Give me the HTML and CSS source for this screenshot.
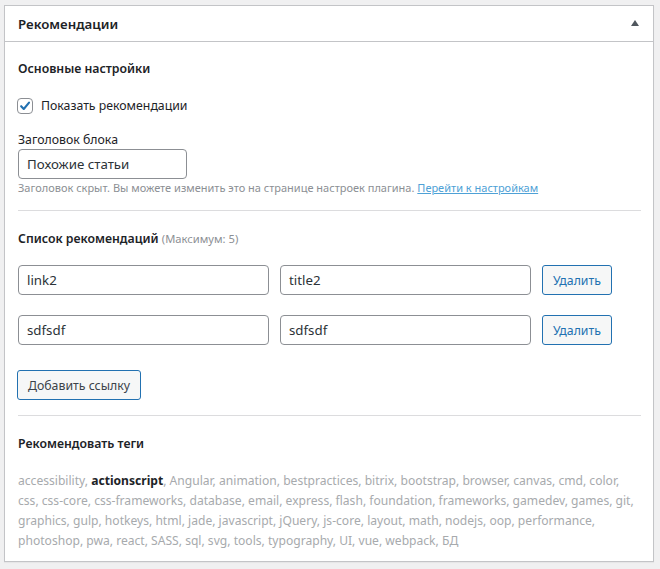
FILE: index.html
```html
<!DOCTYPE html>
<html lang="ru">
<head>
<meta charset="utf-8">
<link rel="stylesheet" href="styles.css">
</head>
<body>
<div class="postbox">
  <div class="postbox-header">
    <h2 class="title">Рекомендации</h2>
    <span class="toggle"></span>
  </div>
  <div class="inside">
    <h3 class="section-title">Основные настройки</h3>
    <label class="check-row">
      <span class="checkbox"><svg viewBox="0 0 16 16" width="16" height="16"><path d="M3.6 8.2 L6.6 11.4 L12.6 4.2" fill="none" stroke="#2271b1" stroke-width="2.4" stroke-linecap="round" stroke-linejoin="round"/></svg></span>
      <span>Показать рекомендации</span>
    </label>
    <div class="field-label">Заголовок блока</div>
    <div class="input short">Похожие статьи</div>
    <p class="description">Заголовок скрыт. Вы можете изменить это на странице настроек плагина. <a href="#">Перейти к настройкам</a></p>
    <hr class="divider">
    <h3 class="section-title list-title">Список рекомендаций <span class="muted">(Максимум: 5)</span></h3>
    <div class="rec-row">
      <div class="input wide">link2</div>
      <div class="input wide">title2</div>
      <span class="button">Удалить</span>
    </div>
    <div class="rec-row">
      <div class="input wide">sdfsdf</div>
      <div class="input wide">sdfsdf</div>
      <span class="button">Удалить</span>
    </div>
    <span class="button add">Добавить ссылку</span>
    <hr class="divider divider-2">
    <h3 class="section-title tags-title">Рекомендовать теги</h3>
    <p class="tags">accessibility, <b>actionscript</b>, Angular, animation, bestpractices, bitrix, bootstrap, browser, canvas, cmd, color, css, css-core, css-frameworks, database, email, express, flash, foundation, frameworks, gamedev, games, git, graphics, gulp, hotkeys, html, jade, javascript, jQuery, js-core, layout, math, nodejs, oop, performance, photoshop, pwa, react, SASS, sql, svg, tools, typography, UI, vue, webpack, БД</p>
  </div>
</div>
</body>
</html>
```

FILE: styles.css
```css
html, body {
  margin: 0;
  padding: 0;
  background: #f0f0f1;
}
body {
  padding: 5px 6px 10px 4px;
  font-family: "Noto Sans", "Open Sans", sans-serif;
  font-size: 12.3px;
  color: #1d2327;
}
.postbox {
  background: #fff;
  border: 1px solid #c3c4c7;
  box-shadow: 0 1px 1px rgba(0,0,0,0.04);
}
.postbox-header {
  display: flex;
  align-items: center;
  justify-content: space-between;
  height: 35px;
  border-bottom: 1px solid #c3c4c7;
  padding: 0 14px 0 13px;
}
.title {
  margin: 0;
  font-size: 13.3px;
  font-weight: 600;
}
.toggle {
  width: 0;
  height: 0;
  border-left: 4px solid transparent;
  border-right: 4px solid transparent;
  border-bottom: 6px solid #50575e;
  margin-top: -1px;
}
.inside {
  padding: 12px 12px 10px 13px;
}
.section-title {
  margin: 6px 0 0;
  font-size: 12.3px;
  font-weight: 600;
  line-height: 18px;
}
.check-row {
  display: flex;
  align-items: center;
  gap: 8px;
  margin-top: 18px;
  line-height: 20px;
}
.checkbox {
  width: 14px;
  height: 14px;
  border: 1px solid #8c8f94;
  border-radius: 4px;
  display: flex;
  align-items: center;
  justify-content: center;
  margin-left: -1px;
}
.field-label {
  margin-top: 15px;
  line-height: 18px;
}
.input {
  box-sizing: border-box;
  height: 30px;
  border: 1px solid #8c8f94;
  border-radius: 4px;
  padding: 0 8px;
  line-height: 28px;
  font-size: 13.3px;
  color: #2c3338;
}
.input.short {
  width: 169px;
}
.description {
  margin: 0;
  font-size: 11px;
  line-height: 18px;
  color: #8c8f94;
}
.description a {
  color: #4ea1d6;
}
.divider {
  border: 0;
  border-top: 1px solid #dcdcde;
  margin: 13px 0 0;
}
.list-title {
  margin-top: 19px;
}
.muted {
  font-weight: 400;
  font-size: 11.2px;
  color: #8c8f94;
}
.rec-row {
  display: flex;
  align-items: center;
  gap: 11px;
  margin-top: 17px;
}
.rec-row + .rec-row {
  margin-top: 20px;
}
.input.wide {
  width: 251px;
}
.button {
  box-sizing: border-box;
  display: inline-flex;
  align-items: center;
  justify-content: center;
  height: 30px;
  padding: 0 10px;
  border: 1px solid #2271b1;
  border-radius: 3px;
  background: #f6f7f7;
  color: #2271b1;
  font-size: 12.3px;
}
.button.add {
  margin-top: 25px;
  margin-left: -1px;
  color: #3c434a;
}
.divider-2 {
  margin-top: 15px;
}
.tags-title {
  margin-top: 19px;
}
.tags {
  margin: 18px 0 0;
  font-size: 12.1px;
  line-height: 20px;
  color: #a7aaad;
}
.tags b {
  color: #1d2327;
  font-weight: 700;
}
```
